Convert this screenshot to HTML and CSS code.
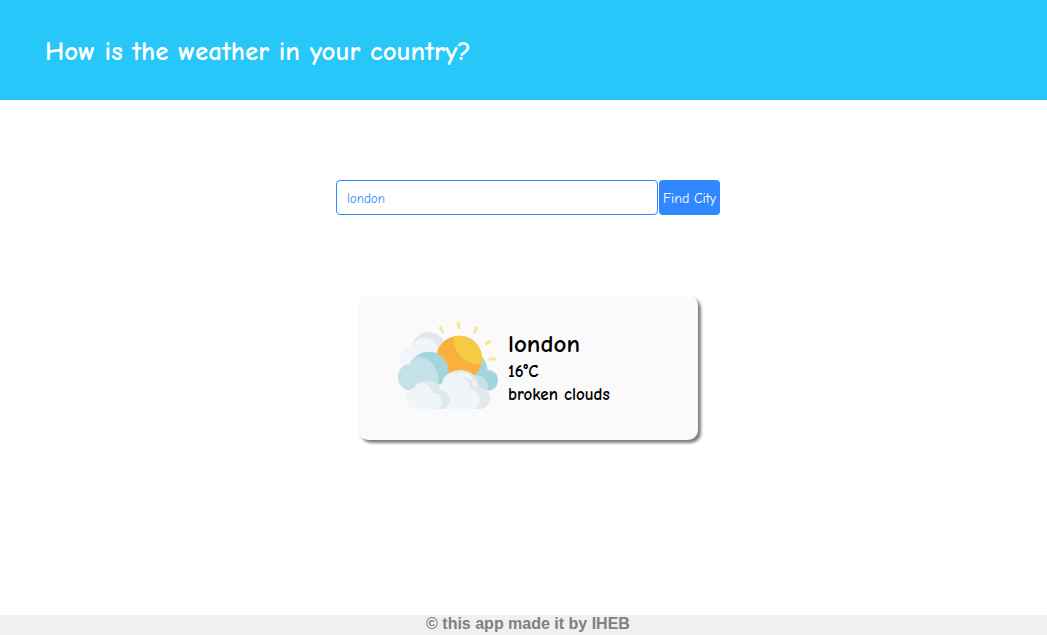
FILE: index.html
```html
<!DOCTYPE html>
<html lang="en">
<head>
<meta charset="utf-8">
<title>Weather</title>
<link rel="stylesheet" href="styles.css">
</head>
<body class="page">
<header class="header"><h1 class="title">How is the weather in your country?</h1></header>
<main class="main">
  <form class="search">
    <input class="search-input" type="text" aria-label="City" value="london">
    <button class="search-button" type="button">Find City</button>
  </form>
  <section class="card">
    <svg class="weather-icon" viewBox="39 33 300 264" aria-hidden="true">
      <g stroke="#f9e88f" stroke-width="9" stroke-linecap="round">
        <path d="M221 38v14M166 53l7 12M275 53l-7 12M303 101l12-7M315 147h14"/>
      </g>
      <path fill="#dfe9ec" d="M78 113C87 82 109 65 133 66C153 67 170 79 176 94L165 160H85Z"/>
      <path fill="#eff5f8" d="M78 113C88 86 118 76 140 90C158 101 163 119 164 136L90 172H69A29 29 0 0 1 78 113Z"/>
      <path fill="#a5d5dc" d="M270 138H290Q305 155 308 180C328 180 339 194 339 211C339 230 325 242 308 242H250Z"/>
      <path fill="#c4e1e8" d="M268 194C290 194 309 211 309 229V242H260Z"/>
      <circle cx="222" cy="146" r="69" fill="#f9b03d"/>
      <path fill="#f6ca45" d="M207 79A69 69 0 0 1 290 161C247 168 206 131 206 91Z"/>
      <path fill="#a5d5dc" d="M78 162C84 137 107 125 132 125C162 125 188 147 191 181V242H100Z"/>
      <path fill="#c4e1e8" d="M75 163C76 155 84 144 94 141C132 141 160 169 160 208V242H78C55 242 39 223 39 202C39 179 55 162 75 163Z"/>
      <path fill="#dfe9ec" d="M178 203C187 188 207 180 229 180C259 181 281 203 284 233C303 234 315 247 315 264C315 282 302 297 284 297H220Z"/>
      <path fill="#eff5f8" d="M172 220C172 205 184 195 198 190C230 189 254 208 254 234C272 238 284 250 284 269C284 285 276 297 264 297H159V224Z"/>
      <path fill="#dfe9ec" d="M88 235C92 220 108 212 127 212C148 212 164 225 166 240C184 243 194 253 194 269C194 286 183 297 166 297H120Z"/>
      <path fill="#eff5f8" d="M88 234C92 225 97 219 105 219C127 219 141 232 143 249C160 249 170 257 170 271Q170 290 158 297H91C75 297 64 283 64 267C64 250 73 236 88 234Z"/>
      <path fill="none" stroke="#f4f8fa" stroke-width="9" stroke-linecap="round" d="M226 192Q246 193 259 205M267 217L269 226"/>
    </svg>
    <div class="weather-text">
      <h2 class="city">london</h2>
      <p class="detail">16°C</p>
      <p class="detail">broken clouds</p>
    </div>
  </section>
</main>
<footer class="footer">© this app made it by IHEB</footer>
</body>
</html>
```
FILE: styles.css
```css
* { box-sizing: border-box; }
.page {
  margin: 0;
  min-height: 100vh;
  display: flex;
  flex-direction: column;
  background: #fff;
  font-family: "Comic Sans MS", "Comic Neue", "Open Sans", sans-serif;
}
.header {
  padding: 34px 45px 30px;
  background: #28c7fa;
}
.title {
  margin: 0;
  font-size: 27px;
  font-weight: 700;
  line-height: 36px;
  color: #fff;
}
.main {
  flex: 1;
  display: flex;
  flex-direction: column;
  align-items: center;
  gap: 80px;
  padding: 80px 0 80px 9px;
}
.search {
  display: flex;
  gap: 1px;
  width: 384px;
  max-width: 100%;
}
.search-input {
  flex: 1;
  min-width: 0;
  height: 35px;
  padding: 2px 10px 0;
  border: 1px solid #2f88ff;
  border-radius: 4px;
  background: #fff;
  color: #2f88ff;
  font-family: inherit;
  font-size: 13px;
}
.search-button {
  width: 61px;
  height: 35px;
  padding: 2px 0 0;
  border: 0;
  border-radius: 4px;
  background: #2f88ff;
  color: #fff;
  font-family: inherit;
  font-size: 14px;
  white-space: nowrap;
}
.card {
  display: flex;
  align-items: center;
  gap: 10px;
  width: 340px;
  max-width: 100%;
  padding: 25px 40px 30px;
  border-radius: 10px;
  background: #fafafa;
  box-shadow: 3px 3px 3px #808080;
}
.weather-icon {
  width: 100px;
  flex: none;
}
.weather-text {
  padding: 8px 0 4px;
  white-space: nowrap;
}
.city {
  margin: 0;
  font-size: 25px;
  font-weight: 700;
  line-height: 32px;
}
.detail {
  margin: 0;
  font-size: 17px;
  font-weight: 700;
  line-height: 23px;
}
.footer {
  padding: 0 0 2px 9px;
  background: #f0f0f0;
  color: #808080;
  font: bold 16px/18px "Liberation Sans", Arial, sans-serif;
  text-align: center;
}
```
